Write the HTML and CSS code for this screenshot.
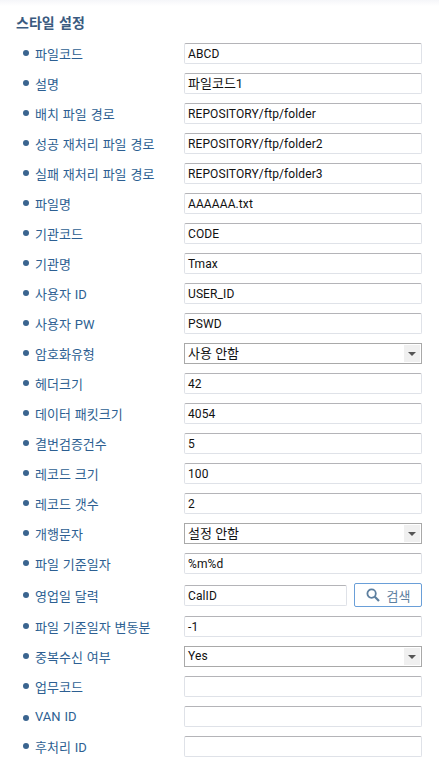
FILE: index.html
```html
<!DOCTYPE html>
<html lang="ko">
<head>
    <meta charset="UTF-8">
    <title>스타일 설정</title>
    <link rel="stylesheet" href="styles.css">
</head>
<body>
    <div class="panel">
        <h2 class="title">스타일 설정</h2>
        <ul class="form-list">
            <li class="row"><label>파일코드</label><div class="field">ABCD</div></li>
            <li class="row"><label>설명</label><div class="field ko">파일코드1</div></li>
            <li class="row"><label>배치 파일 경로</label><div class="field">REPOSITORY/ftp/folder</div></li>
            <li class="row"><label>성공 재처리 파일 경로</label><div class="field">REPOSITORY/ftp/folder2</div></li>
            <li class="row"><label>실패 재처리 파일 경로</label><div class="field">REPOSITORY/ftp/folder3</div></li>
            <li class="row"><label>파일명</label><div class="field">AAAAAA.txt</div></li>
            <li class="row"><label>기관코드</label><div class="field">CODE</div></li>
            <li class="row"><label>기관명</label><div class="field">Tmax</div></li>
            <li class="row"><label>사용자 ID</label><div class="field">USER_ID</div></li>
            <li class="row"><label>사용자 PW</label><div class="field">PSWD</div></li>
            <li class="row"><label>암호화유형</label><div class="select ko"><span>사용 안함</span><i class="arrow"></i></div></li>
            <li class="row"><label>헤더크기</label><div class="field">42</div></li>
            <li class="row"><label>데이터 패킷크기</label><div class="field">4054</div></li>
            <li class="row"><label>결번검증건수</label><div class="field">5</div></li>
            <li class="row"><label>레코드 크기</label><div class="field">100</div></li>
            <li class="row"><label>레코드 갯수</label><div class="field">2</div></li>
            <li class="row"><label>개행문자</label><div class="select ko"><span>설정 안함</span><i class="arrow"></i></div></li>
            <li class="row"><label>파일 기준일자</label><div class="field">%m%d</div></li>
            <li class="row">
                <label>영업일 달력</label>
                <div class="field short">CalID</div>
                <button class="search-btn">
                    <svg width="14" height="14" viewBox="0 0 14 14"><circle cx="5.6" cy="5.6" r="4.2" fill="none" stroke="#5d7f9f" stroke-width="1.8"/><path d="M8.8 8.8L13 13" stroke="#5d7f9f" stroke-width="2.2"/></svg>
                    검색
                </button>
            </li>
            <li class="row"><label>파일 기준일자 변동분</label><div class="field">-1</div></li>
            <li class="row"><label>중복수신 여부</label><div class="select"><span>Yes</span><i class="arrow"></i></div></li>
            <li class="row"><label>업무코드</label><div class="field"></div></li>
            <li class="row"><label>VAN ID</label><div class="field"></div></li>
            <li class="row"><label>후처리 ID</label><div class="field"></div></li>
        </ul>
    </div>
</body>
</html>
```

FILE: styles.css
```css
html, body {
    margin: 0;
    padding: 0;
}

body {
    background-color: #fff;
    font-family: "Roboto", "Noto Sans CJK KR", sans-serif;
    font-size: 13px;
}

.panel {
    width: 439px;
    height: 770px;
    overflow: hidden;
    background: linear-gradient(#f5f6f9, #fff 6px);
    box-sizing: border-box;
    padding: 14px 17px 0 16px;
}

.title {
    margin: 0 0 11px;
    height: 18px;
    line-height: 18px;
    font-size: 14px;
    font-weight: bold;
    word-spacing: 1px;
    color: #3a5a80;
}

.form-list {
    list-style: none;
    margin: 0;
    padding: 0;
}

.row {
    display: flex;
    align-items: center;
    min-height: 21px;
    margin-bottom: 9px;
}

.row label {
    width: 168px;
    padding-left: 19px;
    box-sizing: border-box;
    color: #2d5f92;
    position: relative;
    white-space: nowrap;
    word-spacing: 0.7px;
}

.row label::before {
    content: "";
    position: absolute;
    left: 7px;
    top: 6px;
    width: 6px;
    height: 6px;
    border-radius: 50%;
    background-color: #3a648f;
}

.field {
    flex: 1;
    height: 21px;
    line-height: 20px;
    box-sizing: border-box;
    border: 1px solid #dfe2e8;
    border-top-color: #b4b4b8;
    border-radius: 2px;
    padding: 0 3px;
    font-size: 12px;
    letter-spacing: 0.1px;
    color: #111;
    background-color: #fff;
    white-space: nowrap;
}

.field.short {
    flex: none;
    width: 163px;
}

.select {
    flex: 1;
    display: flex;
    justify-content: space-between;
    height: 21px;
    line-height: 19px;
    box-sizing: border-box;
    border: 1px solid #a9a9a9;
    padding-left: 3px;
    font-size: 12px;
    letter-spacing: 0.1px;
    color: #111;
    background-color: #fff;
}

.field.ko,
.select.ko {
    font-size: 13px;
    letter-spacing: 0;
}

.arrow {
    width: 16px;
    margin: 1px;
    background-color: #f0f0f0;
    position: relative;
}

.arrow::after {
    content: "";
    position: absolute;
    left: 4px;
    top: 7px;
    border-left: 4px solid transparent;
    border-right: 4px solid transparent;
    border-top: 4px solid #555;
}

.search-btn {
    width: 68px;
    height: 24px;
    margin-left: 7px;
    padding: 0;
    display: flex;
    align-items: center;
    justify-content: center;
    gap: 7px;
    font-family: inherit;
    font-size: 13px;
    color: #5d7f9f;
    background-color: #fff;
    border: 1px solid #6a9fd8;
    border-radius: 2px;
}
```
